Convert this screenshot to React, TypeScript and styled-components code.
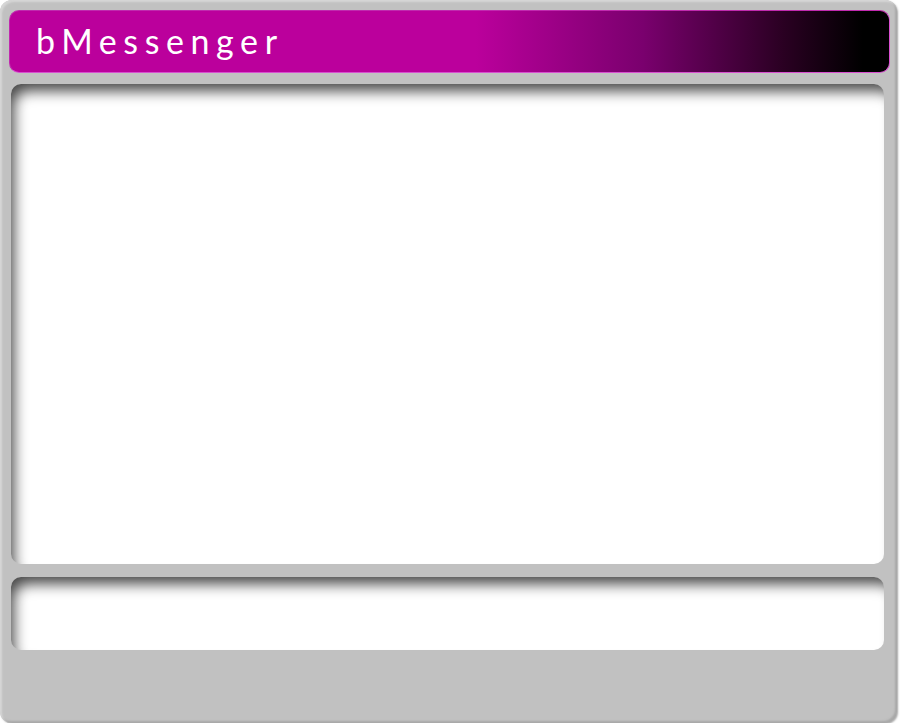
import React from "react";
import styled, { createGlobalStyle } from "styled-components";

const Global = createGlobalStyle`
  html, body { margin: 0; padding: 0; background: #ffffff; }
  body { font-family: "Lato", "Open Sans", sans-serif; }
`;

const Window = styled.div`
  box-sizing: border-box;
  width: 897px;
  height: 723px;
  background: #c1c1c1;
  border-radius: 12px;
  box-shadow: inset 2px 2px 2px #d6d6d6, inset -2px -2px 2px #a8a8a8, 1px 1px 2px rgba(0,0,0,0.35);
  padding: 10px 7px 0 9px;
  display: flex;
  flex-direction: column;
`;

const TitleBar = styled.header`
  box-sizing: border-box;
  height: 63px;
  border-radius: 10px;
  border: 1px solid #d84fd0;
  border-top-color: #c02aae;
  border-left-color: #c02aae;
  background: linear-gradient(90deg, #bb009c 0%, #bb009c 53%, #7a006e 72%, #2a0022 88%, #000000 97%);
  display: flex;
  align-items: center;
  padding-left: 26px;
`;

const Title = styled.h1`
  margin: 0;
  color: #ffffff;
  font-family: "Lato", sans-serif;
  font-weight: 400;
  font-size: 34px;
  letter-spacing: 6.6px;
  line-height: 1;
  margin-top: -2px;
`;

const Panel = styled.div<{ $h: number; $mt: number }>`
  box-sizing: border-box;
  margin: ${(p) => p.$mt}px 6px 0 2px;
  height: ${(p) => p.$h}px;
  background: #ffffff;
  border-radius: 10px;
  box-shadow: inset 7px 11px 14px -4px rgba(0, 0, 0, 0.72);
`;

export default function App() {
  return (
    <>
      <Global />
      <Window>
        <TitleBar>
          <Title>bMessenger</Title>
        </TitleBar>
        <Panel $h={480} $mt={11} />
        <Panel $h={73} $mt={13} />
      </Window>
    </>
  );
}
